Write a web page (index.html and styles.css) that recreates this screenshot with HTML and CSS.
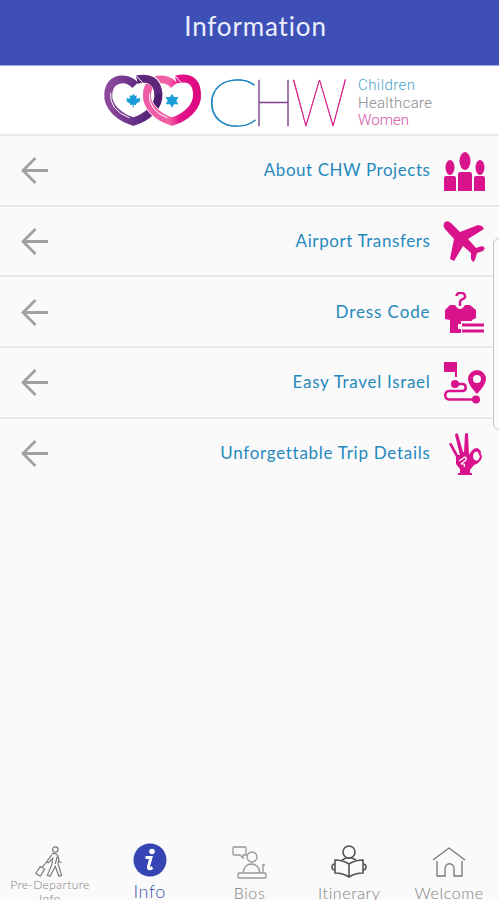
FILE: index.html
```
<!DOCTYPE html>
<html lang="en">
<head>
<meta charset="utf-8">
<title>Information</title>
<link rel="stylesheet" href="styles.css">
</head>
<body>
<div class="app">
  <header class="topbar"><h1>Information</h1></header>
  <div class="brand">
    <svg class="logo" viewBox="0 0 340 68" role="img" aria-label="CHW Children Healthcare Women">
      <defs>
        <linearGradient id="purple"><stop offset="0" stop-color="#8c4a9c"/><stop offset=".5" stop-color="#69308a"/><stop offset="1" stop-color="#4d1b70"/></linearGradient>
        <linearGradient id="pink"><stop offset="0" stop-color="#f05ba5"/><stop offset=".45" stop-color="#f260a6"/><stop offset=".65" stop-color="#e5128b"/><stop offset="1" stop-color="#dc087f"/></linearGradient>
      </defs>
      <g transform="translate(0 -6) scale(.33333)" fill="none">
        <path d="M136 76C110 48 59 51 55 100C51 142 90 172 130 185C170 172 209 142 205 99C202 58 176 50 141 59" stroke="url(#purple)" stroke-width="24"/>
        <path d="M252 76C228 48 175 51 171 100C167 142 206 172 246 185C286 172 325 142 321 99C318 58 292 50 257 59" stroke="#fff" stroke-width="28"/>
        <path d="M252 76C228 48 175 51 171 100C167 142 206 172 246 185C286 172 325 142 321 99C318 58 292 50 257 59" stroke="url(#pink)" stroke-width="24"/>
        <path d="M150 57C180 51 203 64 205 99" stroke="#fff" stroke-width="28"/>
        <path d="M141 59C176 50 203 62 205 103" stroke="#5d267b" stroke-width="24"/>
        <path d="M62 98Q56 149 119 174M178 101Q174 150 232 174M138 47L158 68M254 47L274 68" stroke="#fff" stroke-width="3"/>
        <path fill="#1b9dd9" d="M130 101l5 7 5-2-1 10 12-3-2 6 2 4-13 9 1 3-8-1v9h-3v-9l-8 1 1-3-12-9 2-4-2-6 11 3-1-10 6 2zM246 101l6 10h13l-6 11 6 11h-13l-6 10-6-10h-13l6-11-6-11h13z"/>
      </g>
      <g class="wordmark">
        <text x="116" y="60" textLength="53" lengthAdjust="spacingAndGlyphs" fill="#1683bd" stroke="#1683bd">C</text>
        <text x="162" y="60" textLength="43" lengthAdjust="spacingAndGlyphs" fill="#7b438c" stroke="#7b438c">H</text>
        <text x="201.500" y="60" textLength="56" lengthAdjust="spacingAndGlyphs" fill="#d51886" stroke="#d51886">W</text>
      </g>
      <g class="tagline">
        <text x="268" y="24" textLength="57" fill="#4e9fc7">Children</text>
        <text x="268" y="42" textLength="74" fill="#8e8794">Healthcare</text>
        <text x="268" y="59" textLength="51" fill="#d353a4">Women</text>
      </g>
    </svg>
  </div>
  <main class="menu">
    <a class="row"><svg class="arrow" viewBox="0 0 28 28"><path d="M14.500 1.500L2 14l12.500 12.500M2 14h25"/></svg><span class="label l1">About CHW Projects</span>
      <svg class="icon" viewBox="0 0 44 44"><ellipse cx="22" cy="9" rx="5.500" ry="9"/><ellipse cx="7" cy="15.500" rx="4.500" ry="7.500"/><ellipse cx="37" cy="15.500" rx="4.500" ry="7.500"/><path d="M17 20h10q2 0 2 3v16H15V23q0-3 2-3zM3 24h8q2 0 2 3v12H1V27q0-3 2-3zM33 24h7q2 0 2 3v12H31V27q0-3 2-3z"/></svg></a>
    <a class="row"><svg class="arrow" viewBox="0 0 28 28"><path d="M14.500 1.500L2 14l12.500 12.500M2 14h25"/></svg><span class="label l2">Airport Transfers</span>
      <svg class="icon" viewBox="0 0 44 44"><path d="M2 1q3-2 6 1l9 9 18-7 4 1 2 3L25 18l8 9 6-2 3 2-2 3-6 2-2 7-2 2-2-3v-6l-8-7-9 15-4-2 4-20-9-10Q-1 4 2 1z"/></svg></a>
    <a class="row"><svg class="arrow" viewBox="0 0 28 28"><path d="M14.500 1.500L2 14l12.500 12.500M2 14h25"/></svg><span class="label l3">Dress Code</span>
      <svg class="icon" viewBox="0 0 44 44"><path d="M13.500 4C14-1 23 0 22 5c-1 3-5 2-5 5v4" class="line"/><path d="M7 13h5q5 8 10 0h5l6 5v8l-4 2v1H18v3h-3v5h3v4H7V28l-5-1v-9zM19 31.500h22v3H19zM19 37.500h22v3H19z"/></svg></a>
    <a class="row"><svg class="arrow" viewBox="0 0 28 28"><path d="M14.500 1.500L2 14l12.500 12.500M2 14h25"/></svg><span class="label l4">Easy Travel Israel</span>
      <svg class="icon" viewBox="0 0 44 44"><path d="M1 0h13v15h-2v-5H1zM34 8a9 9 0 0 1 9 9c0 6-9 15-9 15s-9-9-9-15a9 9 0 0 1 9-9zm0 5a4 4 0 1 0 0 8 4 4 0 0 0 0-8z" fill-rule="evenodd"/><circle cx="12" cy="22" r="4"/><circle cx="33" cy="37.500" r="4"/><path d="M12 22h7c5 0 5 7 0 7H6c-5 0-5 8.500 0 8.500h27" class="line"/></svg></a>
    <a class="row"><svg class="arrow" viewBox="0 0 28 28"><path d="M14.500 1.500L2 14l12.500 12.500M2 14h25"/></svg><span class="label l5">Unforgettable Trip Details</span>
      <svg class="icon" viewBox="0 0 44 44"><path d="M6 11q2-2 3 0l6 11h2L12 2q1-3 3-1l5 18h1l1-18q2-2 3 0l1 21c2-4 5-7 8-7 3 1 4 3 4 5l-3-2q-5 0-5 6 1 5 6 3l2-4q0 7-7 9l-4 5v3h2v2H15v-2h2v-4l-4-5V24z"/><path d="M32 18l2-1q3 2 4 7l-2 4" fill="none" stroke="#d9138c" stroke-width="2"/><path d="M16 28l6-4q2 1 1 3l-5 4q5-1 3 3" fill="none" stroke="#fafafa" stroke-width="1.300"/></svg></a>
  </main>
  <nav class="tabs">
    <a class="tab small"><svg viewBox="0 0 36 36"><circle cx="24" cy="4" r="3"/><path d="M20 9q4-2 7 2l1 6 3 2M20 10l-6 8 2 1 5-5-1 7-5 12 3 1 6-11 4 11 3-1-4-13 1-6M26 12l-2 8M7 23l5 3-5 8-5-3zM9 24l5-6"/></svg><span class="caption">Pre-Departure<br>Info</span></a>
    <a class="tab active"><svg viewBox="0 0 36 36"><circle cx="18" cy="18" r="16.500" fill="#3546b4" stroke="none"/><circle cx="20" cy="9.500" r="2.800" fill="#fff" stroke="none"/><path d="M13.500 15.500h5.500l-2.500 9q-.5 4 4 1" stroke="#fff" stroke-width="3"/></svg><span class="caption">Info</span></a>
    <a class="tab bios"><svg viewBox="0 0 36 36"><path d="M3 5h11q1 0 1 1v7h-3v3l-3-3H3q-1 0-1-1V6q0-1 1-1zM12 31c1-12 16-12 17 0M8 31h26q1 0 1 1v3q0 1-1 1H8q-1 0-1-1v-3q0-1 1-1zM32 31v-8m-1 0h3"/><circle cx="21" cy="15" r="5"/></svg><span class="caption">Bios</span></a>
    <a class="tab itin"><svg viewBox="0 0 36 36"><circle cx="18" cy="10" r="6"/><path d="M4 18q8 0 14 4 6-4 14-4v13q-8 0-14 4-6-4-14-4zM18 22v13M11 18l4-2h6l4 2M4 22c-4 0-4 6 0 6m28-6c4 0 4 6 0 6"/></svg><span class="caption">Itinerary</span></a>
    <a class="tab home"><svg viewBox="0 0 36 36"><path d="M2 18L18 6l16 12M6 19v15h8V27c0-7 9-7 9 0v7h8V19"/></svg><span class="caption">Welcome</span></a>
  </nav>
  <div class="edge-panel"></div>
</div>
</body>
</html>
```
FILE: styles.css
```
* { box-sizing: border-box; }
body { margin: 0; overflow: hidden; font-family: Lato, "Open Sans", sans-serif; background: #fafafa; }
.app { position: relative; display: flex; flex-direction: column; height: 900px; overflow: hidden; }
.topbar { flex: 0 0 66px; background: #3e50b5; border-bottom: 1px solid #9ea6dc; display: flex; justify-content: center; padding: 10px 0 0 12px; }
h1 { margin: 0; font-size: 26px; line-height: 32px; font-weight: 400; letter-spacing: .85px; color: #eceefe; }
.brand { flex: 0 0 68px; background: #fff; padding-left: 90px; }
.logo { display: block; width: 340px; height: 68px; overflow: visible; }
.wordmark { font-size: 65px; font-weight: 100; stroke-width: .6px; }
.tagline { font-family: Roboto, sans-serif; font-size: 15px; font-weight: 300; }
.menu { flex: 1; }
.row { height: 70.700px; border-top: 2px solid #e9e9e9; display: flex; align-items: center; padding: 0 12px 0 21px; }
.arrow { width: 28px; height: 28px; fill: none; stroke: #a1a1a1; stroke-width: 2.800; transform: translateY(.5px); }
.label { margin-left: auto; margin-right: 12.500px; font-size: 17px; line-height: 24px; color: #2589bd; white-space: nowrap; letter-spacing: .55px; }
.l2 { letter-spacing: .6px; }
.l3 { letter-spacing: .9px; }
.l4 { letter-spacing: .7px; }
.l5 { letter-spacing: .72px; }
.icon { width: 44px; height: 44px; fill: #d9138c; transform: translateY(2px); }
.icon .line { fill: none; stroke: #d9138c; stroke-width: 2.500; }
.row:first-child .icon { transform: translateY(4px); }
.tabs { flex: 0 0 60px; display: grid; grid-template-columns: repeat(5, 1fr); overflow: hidden; }
.tab { display: flex; flex-direction: column; align-items: center; color: #808080; white-space: nowrap; }
.tab svg { width: 36px; height: 36px; overflow: visible; flex: none; fill: none; stroke: #777; stroke-width: 1.300; margin-top: 2px; }
.caption { font-size: 16px; line-height: 20px; margin-top: 5px; text-align: center; letter-spacing: .6px; font-weight: 300; }
.small svg { margin-top: 6px; height: 32px; }
.small .caption { font-size: 12px; line-height: 14px; margin-top: 0; letter-spacing: .4px; }
.active { color: #4555b5; }
.active .caption { font-size: 18px; margin-top: 3px; }
.bios svg { stroke: #999; }
.itin svg { stroke: #555; stroke-width: 1.600; }
.edge-panel { position: absolute; left: 493px; top: 238px; width: 20px; height: 192px; border: 1px solid #c6c6c6; border-radius: 6px; background: #fafafa; }
```
